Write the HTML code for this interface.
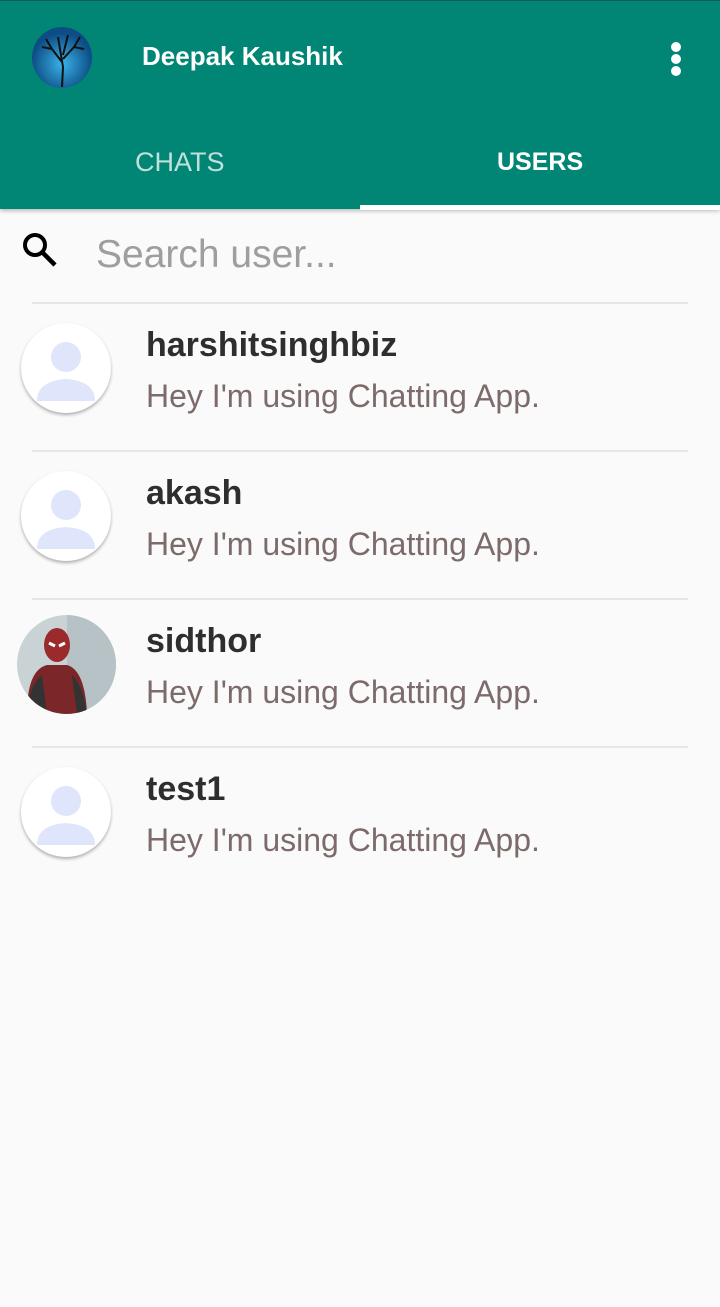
<!DOCTYPE html>
<html><head><meta charset="utf-8"><style>
*{margin:0;padding:0;box-sizing:border-box}
body{width:720px;height:1307px;background:#fafafa;font-family:"Liberation Sans",Roboto,sans-serif;position:relative;overflow:hidden}
.hdr{position:absolute;left:0;top:0;width:720px;height:209px;background:#018574;border-top:1px solid #0b5e55;box-shadow:0 2px 4px rgba(0,0,0,.25)}
.ind{position:absolute;left:360px;top:204px;width:360px;height:5px;background:#fff}
.t{position:absolute;color:#fff;font-weight:bold}
.tab{position:absolute;top:146px;font-size:27px;}
.sep{position:absolute;left:32px;width:656px;height:2px;background:#e6e6e6}
.av{position:absolute;left:21px;width:90px;height:90px;border-radius:50%;background:#fff;box-shadow:0 2px 3px rgba(0,0,0,.3);overflow:hidden}
.name{position:absolute;left:146px;font-size:34px;font-weight:bold;color:#2e2e2e}
.st{position:absolute;left:146px;font-size:32px;color:#7d6b6b}
</style></head><body>
<div class="hdr">
<svg style="position:absolute;left:32px;top:26px" width="60" height="61"><defs><radialGradient id="g" cx="50%" cy="60%"><stop offset="0" stop-color="#3ab3e8"/><stop offset="1" stop-color="#0d4d86"/></radialGradient></defs><ellipse cx="30" cy="30.5" rx="30" ry="30.5" fill="url(#g)"/><path d="M30 60 L31 40 L29 28 M30 35 L20 22 L14 12 M31 32 L42 20 L48 10 M29 28 L26 10 M31 28 L36 8 M20 22 L10 20 M42 20 L52 22" stroke="#111" stroke-width="2" fill="none"/></svg>
<div class="t" style="left:142px;top:40px;font-size:26px">Deepak Kaushik</div>
<div style="position:absolute;left:671px;top:41px;width:10px;height:10px;border-radius:50%;background:#fff;box-shadow:0 12px 0 #fff,0 24px 0 #fff"></div>
<div class="tab" style="left:135px;color:#bfe0db">CHATS</div>
<div class="tab t" style="left:497px;top:147px;font-size:25px">USERS</div>
<div class="ind"></div>
</div>
<svg style="position:absolute;left:20px;top:230px" width="40" height="40" viewBox="0 0 40 40"><circle cx="15" cy="15" r="10" stroke="#000" stroke-width="4" fill="none"/><path d="M22 22 L35 35" stroke="#000" stroke-width="4.5"/></svg>
<div style="position:absolute;left:96px;top:233px;font-size:39px;color:#9e9e9e">Search user...</div>
<div class="sep" style="top:302px"></div>
<div class="sep" style="top:450px"></div>
<div class="sep" style="top:598px"></div>
<div class="sep" style="top:746px"></div>

<div class="av" style="top:323px"><svg width="90" height="90"><circle cx="45" cy="34" r="15" fill="#dfe6fb"/><path d="M16 78 Q16 58 45 56 Q74 58 74 78 Z" fill="#dfe6fb"/></svg></div>
<div class="name" style="top:326px">harshitsinghbiz</div>
<div class="st" style="top:378px">Hey I'm using Chatting App.</div>

<div class="av" style="top:471px"><svg width="90" height="90"><circle cx="45" cy="34" r="15" fill="#dfe6fb"/><path d="M16 78 Q16 58 45 56 Q74 58 74 78 Z" fill="#dfe6fb"/></svg></div>
<div class="name" style="top:474px">akash</div>
<div class="st" style="top:526px">Hey I'm using Chatting App.</div>

<div class="av" style="top:615px;left:17px;width:99px;height:99px;box-shadow:none;background:#c9d3d6"><svg width="99" height="99"><rect x="50" y="0" width="49" height="99" fill="#b6c2c6"/><path d="M10 99 Q10 55 30 50 L50 50 Q68 55 70 99Z" fill="#7b2628"/><path d="M10 99 Q12 70 25 60 L30 99Z M55 60 Q66 70 70 99 L60 99Z" fill="#333"/><ellipse cx="40" cy="30" rx="13" ry="17" fill="#9b2a2c"/><path d="M32 28 L38 31 M48 28 L42 31" stroke="#fff" stroke-width="3"/></svg></div>
<div class="name" style="top:622px">sidthor</div>
<div class="st" style="top:674px">Hey I'm using Chatting App.</div>

<div class="av" style="top:767px"><svg width="90" height="90"><circle cx="45" cy="34" r="15" fill="#dfe6fb"/><path d="M16 78 Q16 58 45 56 Q74 58 74 78 Z" fill="#dfe6fb"/></svg></div>
<div class="name" style="top:770px">test1</div>
<div class="st" style="top:822px">Hey I'm using Chatting App.</div>
</body></html>
